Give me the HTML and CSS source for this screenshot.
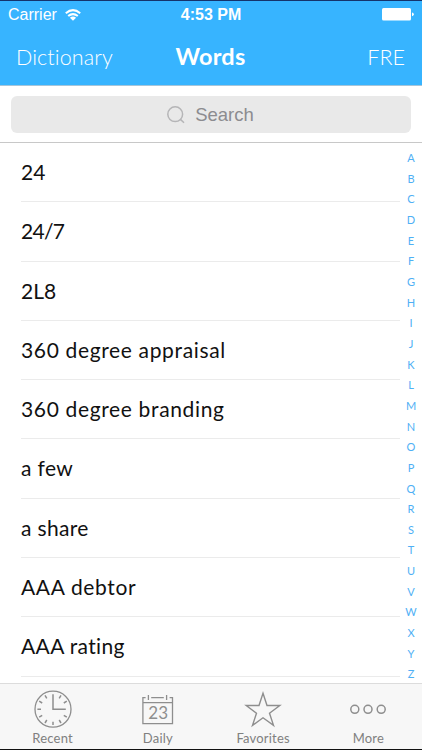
FILE: index.html
```html
<!DOCTYPE html>
<html lang="en">

<head>
  <meta charset="UTF-8">
  <meta name="viewport" content="width=device-width, initial-scale=1.0">
  <title>Words</title>
  <link rel="stylesheet" href="styles.css">
</head>

<body>
  <div class="phone">
    <header class="header">
      <div class="status">
        <div class="carrier">
          <span>Carrier</span>
          <svg class="wifi" width="16" height="12" viewBox="0 0 16 12" fill="none" stroke="#fff" stroke-width="2">
            <path d="M0.8 4.2Q8 -2 15.2 4.2"/>
            <path d="M3.2 7.1Q8 3.1 12.8 7.1"/>
            <path d="M8 11.8L4.9 8.7Q8 6.4 11.1 8.7Z" fill="#fff" stroke="none"/>
          </svg>
        </div>
        <div class="time">4:53 PM</div>
        <svg class="battery" width="32" height="13" viewBox="0 0 32 13" fill="#fff">
          <rect x="0" y="0" width="29" height="12.6" rx="1.5"/>
          <path d="M30 4.5Q31.8 4.6 31.8 6.3Q31.8 8 30 8.2Z"/>
        </svg>
      </div>
      <nav class="navbar">
        <a class="nav_left">Dictionary</a>
        <h1 class="title">Words</h1>
        <a class="nav_right">FRE</a>
      </nav>
    </header>

    <div class="search">
      <div class="search_box">
        <svg width="18" height="18" viewBox="0 0 18 18" fill="none" stroke="#b5b5b7" stroke-width="1.5">
          <circle cx="8.2" cy="8.2" r="7.4"/>
          <path d="M13.4 13.4L17 16.8"/>
        </svg>
        <span>Search</span>
      </div>
    </div>

    <main class="content">
      <ul class="list">
        <li>24</li>
        <li class="tight">24/7</li>
        <li>2L8</li>
        <li class="wide">360 degree appraisal</li>
        <li class="wide">360 degree branding</li>
        <li class="mid">a few</li>
        <li class="mid">a share</li>
        <li class="wide">AAA debtor</li>
        <li class="mid">AAA rating</li>
      </ul>
      <div class="index">
        <span>A</span>
        <span>B</span>
        <span>C</span>
        <span>D</span>
        <span>E</span>
        <span>F</span>
        <span>G</span>
        <span>H</span>
        <span>I</span>
        <span>J</span>
        <span>K</span>
        <span>L</span>
        <span>M</span>
        <span>N</span>
        <span>O</span>
        <span>P</span>
        <span>Q</span>
        <span>R</span>
        <span>S</span>
        <span>T</span>
        <span>U</span>
        <span>V</span>
        <span>W</span>
        <span>X</span>
        <span>Y</span>
        <span>Z</span>
      </div>
    </main>

    <footer class="tabbar">
      <a class="tab">
        <svg width="38" height="38" viewBox="0 0 38 38" fill="none" stroke="#8e8e8e" stroke-width="1.3">
          <circle cx="19" cy="19.2" r="18"/>
          <path d="M19 4.3V19.2H31.8" stroke-width="1.5"/>
          <path d="M19 31.7V35M3.4 19.2H7M11 5.4L12.8 8.4M27 5.4L25.2 8.4M5.2 11.2L8.2 13M32.8 11.2L29.8 13M5.2 27.2L8.2 25.4M32.8 27.2L29.8 25.4M11 33L12.8 30M27 33L25.2 30" stroke-width="1.5"/>
        </svg>
        <span>Recent</span>
      </a>
      <a class="tab">
        <svg width="38" height="38" viewBox="0 0 38 38" fill="none" stroke="#8e8e8e" stroke-width="1.3">
          <path d="M6.6 7.6H3.9V33.7H33.5V7.6H30.6M12.2 7.6H24.8M3.9 12.7H33.5M9.4 5V10M27.6 5V10"/>
          <text class="day" x="19.2" y="29.2">23</text>
        </svg>
        <span>Daily</span>
      </a>
      <a class="tab">
        <svg width="38" height="38" viewBox="0 0 38 38" fill="none" stroke="#8e8e8e" stroke-width="1.4">
          <path d="M19 3.2L23 15.5H35.8L25.5 23.2L29.5 35.4L19 27.8L8.5 35.4L12.5 23.2L2.2 15.5H15Z"/>
        </svg>
        <span>Favorites</span>
      </a>
      <a class="tab">
        <svg width="38" height="38" viewBox="0 0 38 38" fill="none" stroke="#8e8e8e" stroke-width="1.5">
          <circle cx="5.8" cy="19.3" r="4"/>
          <circle cx="19" cy="19.3" r="4"/>
          <circle cx="32.2" cy="19.3" r="4"/>
        </svg>
        <span>More</span>
      </a>
    </footer>
  </div>
</body>

</html>
```
FILE: styles.css
```css
* {
  margin: 0;
  padding: 0;
  box-sizing: border-box;
}

body {
  width: 422px;
  height: 750px;
  overflow: hidden;
  background: #fff;
  font-family: Lato, sans-serif;
  font-variant-ligatures: none;
}

.phone {
  display: flex;
  flex-direction: column;
  height: 750px;
  border-top: 1px solid #15336b;
  border-bottom: 1px solid #111;
}

/* blue header */
.header {
  height: 85px;
  background: #37b4ff;
  border-bottom: 1px solid #a5c5da;
  color: #fff;
}

.status {
  display: grid;
  grid-template-columns: 1fr auto 1fr;
  align-items: center;
  height: 27px;
  padding: 0 8px;
  font-family: "Liberation Sans", Arial, sans-serif;
  font-size: 16px;
}

.carrier {
  display: flex;
  align-items: center;
  gap: 8px;
}

.time {
  font-weight: bold;
  font-size: 16px;
}

.battery {
  justify-self: end;
}

.navbar {
  display: grid;
  grid-template-columns: 1fr auto 1fr;
  align-items: center;
  height: 57px;
  padding: 0 17px 0 16px;
}

.nav_left,
.nav_right {
  font-size: 21.5px;
  font-weight: 300;
}

.nav_left {
  letter-spacing: 0.1px;
}

.nav_right {
  justify-self: end;
}

.title {
  padding-bottom: 2px;
  font-size: 23.5px;
  font-weight: bold;
  letter-spacing: 0.2px;
}

/* search */
.search {
  height: 57px;
  padding: 10px 11px;
  border-bottom: 1px solid #c8c8c8;
}

.search_box {
  display: flex;
  justify-content: center;
  align-items: center;
  gap: 10px;
  height: 37px;
  padding-right: 1px;
  border-radius: 6px;
  background: #e9e9e9;
  color: #8c8c90;
  font-family: "Liberation Sans", Arial, sans-serif;
  font-size: 18.5px;
}

/* words */
.content {
  display: flex;
  flex: 1;
  min-height: 0;
  overflow: hidden;
}

.list {
  flex: 1;
  padding-left: 21px;
  list-style: none;
}

.list li {
  height: 59.3px;
  border-bottom: 1px solid #ebebeb;
  line-height: 58px;
  font-size: 21px;
  color: #111;
}

.list .tight {
  letter-spacing: -0.7px;
}

.list .mid {
  letter-spacing: 0.35px;
}

.list .wide {
  letter-spacing: 0.65px;
}

.index {
  display: flex;
  flex-direction: column;
  width: 22px;
  padding-top: 5px;
  text-align: center;
  font-size: 11px;
  color: #4fb0f5;
}

.index span {
  height: 20.67px;
  line-height: 20.67px;
  flex-shrink: 0;
}

/* bottom tabs */
.tabbar {
  display: grid;
  grid-template-columns: repeat(4, 1fr);
  height: 66px;
  padding-right: 1px;
  border-top: 1px solid #dcdcdc;
  background: #f7f7f7;
}

.tab {
  display: flex;
  flex-direction: column;
  align-items: center;
  padding-top: 6px;
  font-size: 13px;
  line-height: 21px;
  letter-spacing: 0.2px;
  color: #808080;
}

.day {
  fill: #8e8e8e;
  stroke: none;
  font-size: 17px;
  text-anchor: middle;
}
```
